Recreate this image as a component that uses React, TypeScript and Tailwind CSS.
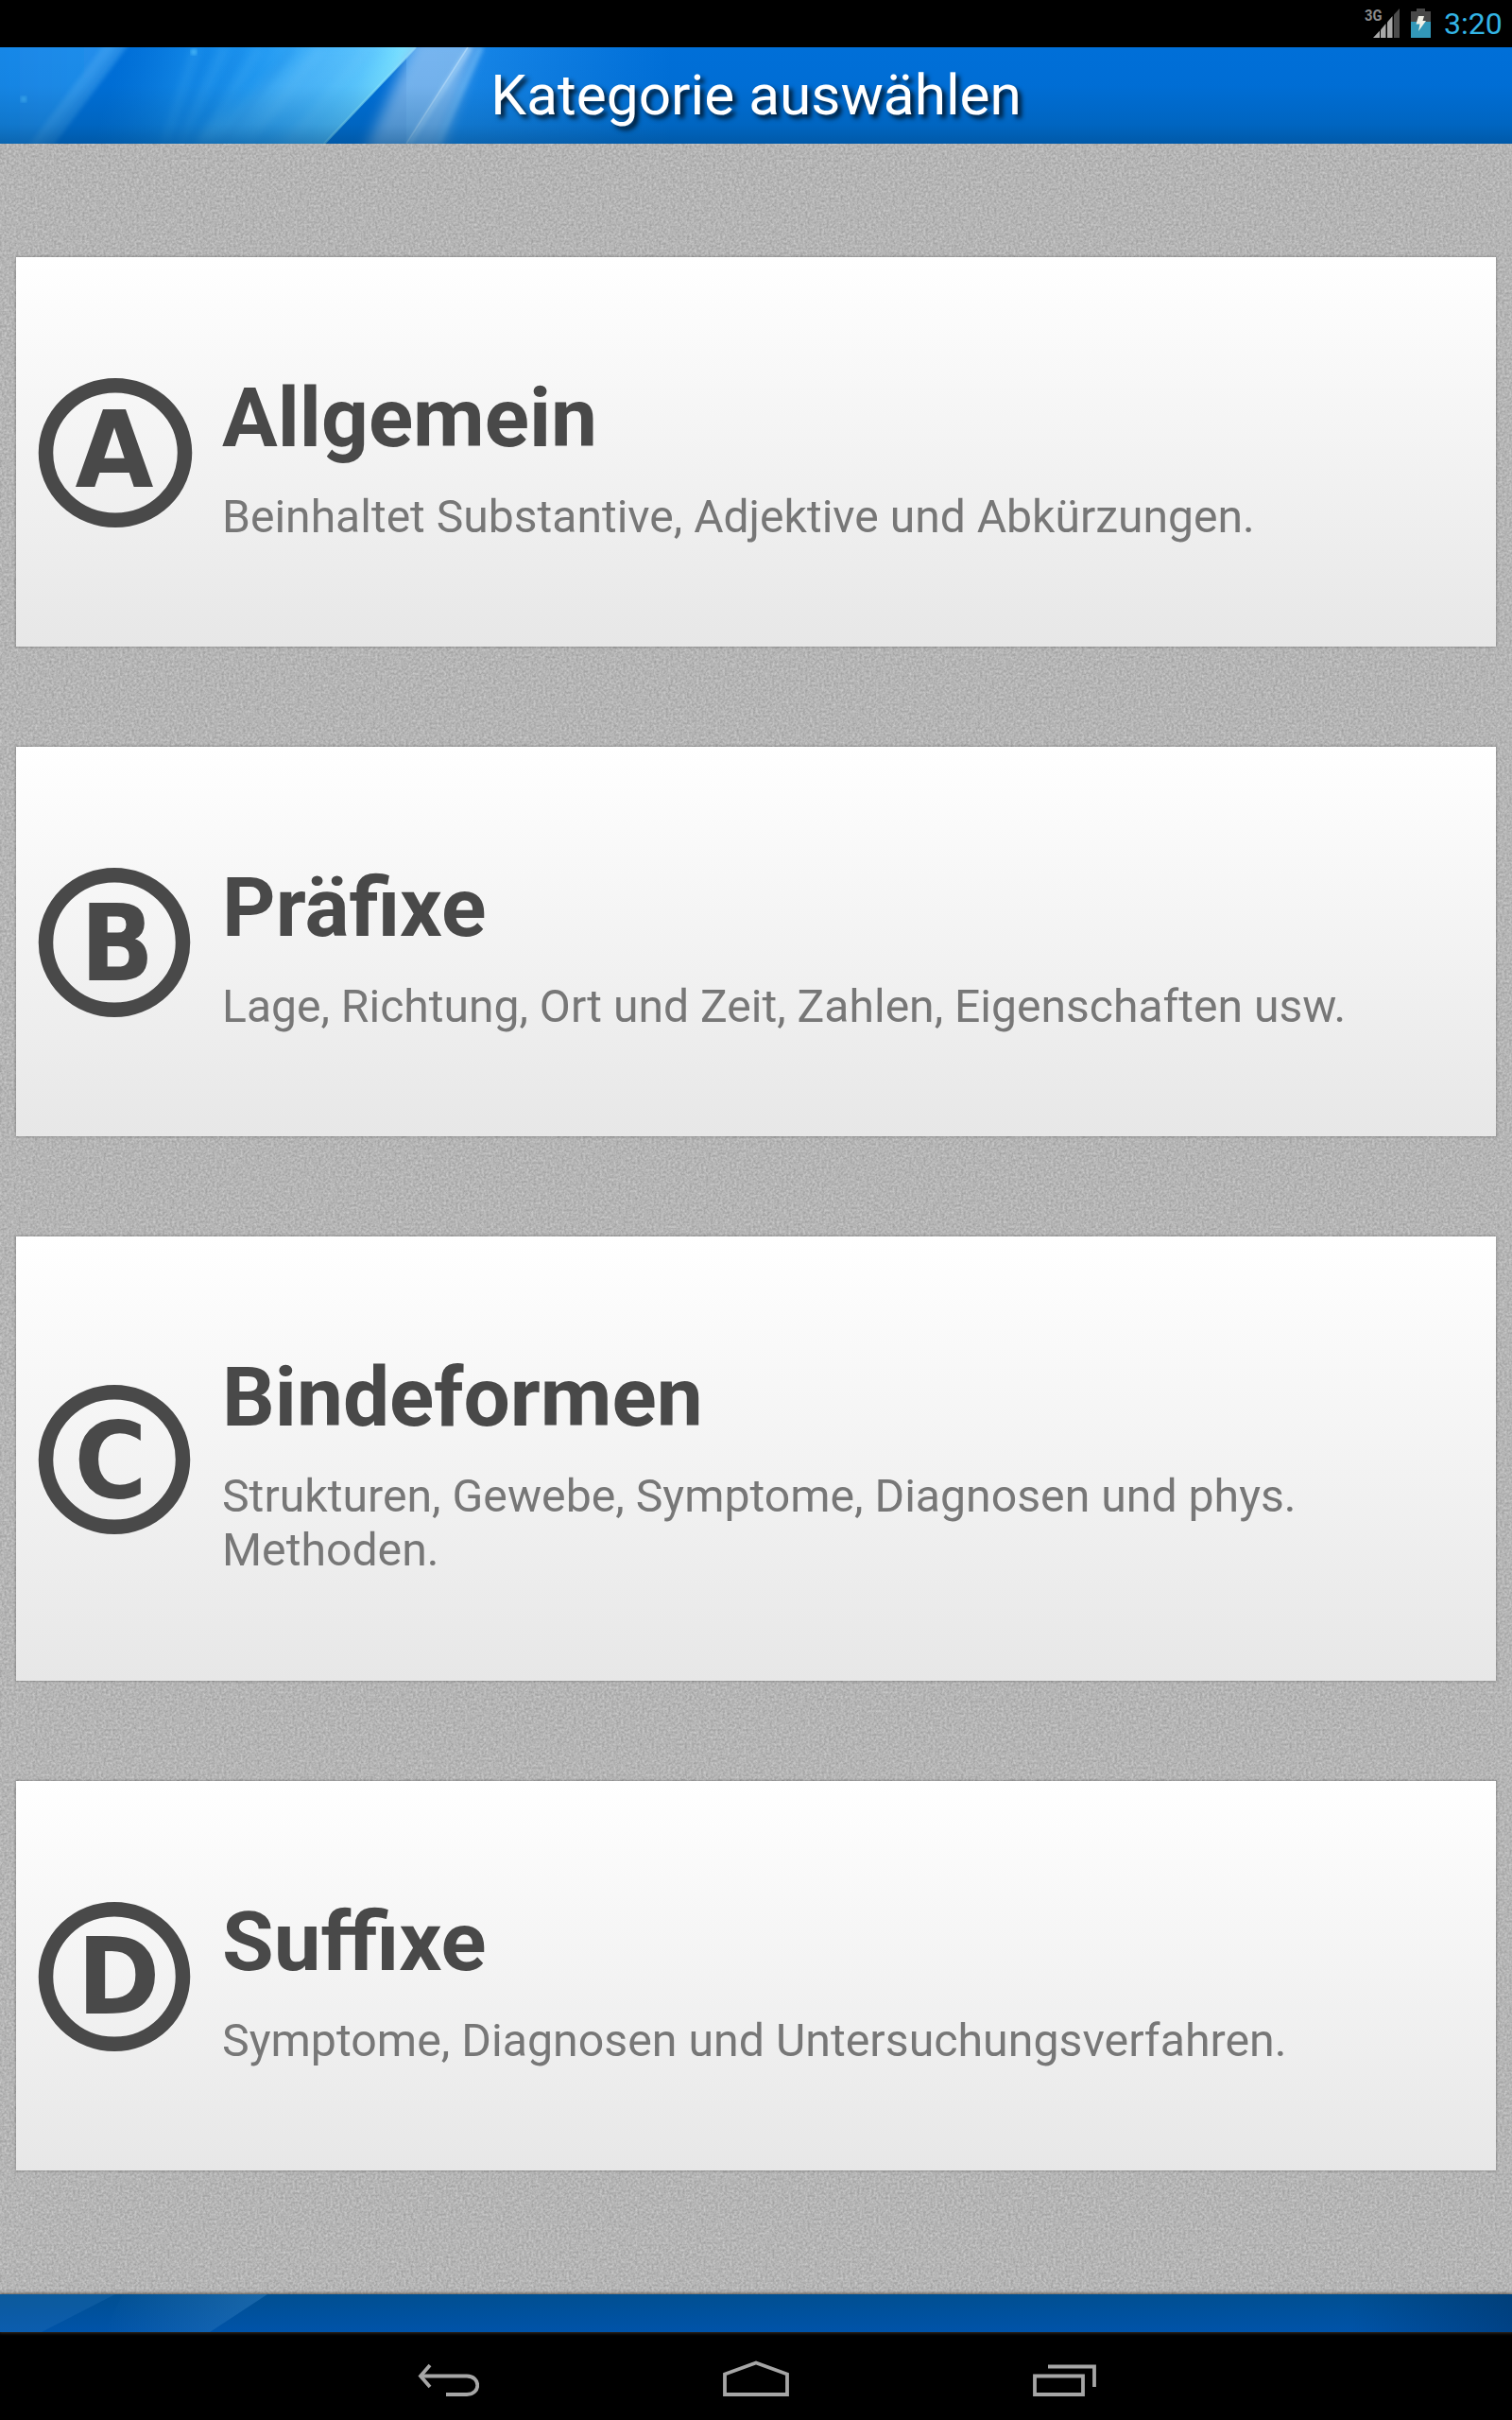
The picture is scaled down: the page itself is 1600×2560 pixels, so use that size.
const categories = [
  { letter: 'A', title: 'Allgemein', text: 'Beinhaltet Substantive, Adjektive und Abkürzungen.', letterX: 81, letterY: 116, width: 83, rx: 73.5, titleScale: 0.993, textScale: 1.001 },
  { letter: 'B', title: 'Präfixe', text: 'Lage, Richtung, Ort und Zeit, Zahlen, Eigenschaften usw.', letterX: 84, letterY: 120, width: 78, rx: 72.5, titleScale: 0.999, textScale: 1.001 },
  { letter: 'C', title: 'Bindeformen', text: 'Strukturen, Gewebe, Symptome, Diagnosen und phys. Methoden.', letterX: 77, letterY: 119.5, width: 77, rx: 72.5, titleScale: 0.993, textScale: 1.004 },
  { letter: 'D', title: 'Suffixe', text: 'Symptome, Diagnosen und Untersuchungsverfahren.', letterX: 85.5, letterY: 119, width: 88, rx: 72.5, titleScale: 1.01, textScale: 1.006 },
];

type Category = (typeof categories)[number];

function StatusBar() {
  return (
    <div className="h-[50px] bg-black flex items-center justify-end pr-3">
      <svg className="w-[38px] h-[50px]" viewBox="0 0 38 50">
        <text x="0" y="22" fontSize="17" fontWeight="700" fill="#8a8a8a" textLength="18.500" lengthAdjust="spacingAndGlyphs" className="font-['Roboto',sans-serif]">3G</text>
        <path d="M9 40L16 32.500V40z" fill="#a8a8a8" />
        <path d="M17 31.500L22.500 25V40H17z" fill="#a8a8a8" />
        <path d="M24 23.500L29.500 17V40H24z" fill="#a8a8a8" />
        <path d="M31 15.500L37 9V40H31z" fill="#4c4c4c" />
      </svg>
      <svg className="w-[21px] h-[50px] ml-[11px]" viewBox="0 0 21 50">
        <path d="M0 12H6V9H15V12H21V24H0z" fill="#484848" />
        <path d="M0 23H21V40H0z" fill="#3297b8" />
        <path d="M8 17H14L12.500 22H16L8 33L9.500 25.500H5.500z" fill="#f1f1e8" />
      </svg>
      <span className="ml-[14px] w-[60px] text-right text-[32px] leading-[50px] text-[#33b5e5] whitespace-nowrap">3:20</span>
    </div>
  );
}

function Header() {
  return (
    <header className="relative h-[102px] overflow-hidden bg-[#006fd8] flex items-center justify-center">
      <svg className="absolute inset-0 w-full h-full" viewBox="0 0 1600 102" preserveAspectRatio="none">
        <defs>
          <linearGradient id="glow" gradientUnits="userSpaceOnUse" x1="130" y1="0" x2="400" y2="85">
            <stop offset="0" stopColor="#0a7de0" stopOpacity="0" />
            <stop offset="0.25" stopColor="#1288e8" stopOpacity="0.9" />
            <stop offset="0.5" stopColor="#2199f2" />
            <stop offset="0.7" stopColor="#42b2fa" />
            <stop offset="0.88" stopColor="#5cc8ff" />
            <stop offset="1" stopColor="#78e0ff" />
          </linearGradient>
          <linearGradient id="left" x1="0" x2="1">
            <stop offset="0" stopColor="#1585e6" />
            <stop offset="1" stopColor="#2490ec" />
          </linearGradient>
          <linearGradient id="halo" x1="0" x2="1">
            <stop offset="0" stopColor="#1d8cec" />
            <stop offset="1" stopColor="#1d8cec" stopOpacity="0" />
          </linearGradient>
          <linearGradient id="shade" x1="0" x2="0" y1="0" y2="1">
            <stop offset="0" stopColor="#004a80" stopOpacity="0" />
            <stop offset="0.4" stopColor="#004a80" stopOpacity="0.04" />
            <stop offset="0.8" stopColor="#004a80" stopOpacity="0.26" />
            <stop offset="1" stopColor="#004378" stopOpacity="0.5" />
          </linearGradient>
          <filter id="soft2"><feGaussianBlur stdDeviation="2" /></filter>
          <filter id="soft4"><feGaussianBlur stdDeviation="4" /></filter>
          <filter id="soft7" x="-30%" width="160%"><feGaussianBlur stdDeviation="7" /></filter>
        </defs>
        <rect x="430" width="280" height="102" fill="url(#halo)" />
        <path d="M-30 -20H140L30 122H-30z" fill="url(#left)" filter="url(#soft4)" />
        <path d="M112 -5H138L54 107H28z" fill="#4aa6f0" opacity=".45" filter="url(#soft2)" />
        <path d="M120 -5H445L338 107H100z" fill="url(#glow)" />
        <path d="M330 0H410L250 102H200z" fill="#58bcfa" opacity=".45" filter="url(#soft7)" />
        <path d="M440 0L343 102" stroke="#8be8ff" strokeWidth="2.500" opacity=".7" />
        <path d="M208 0L175 102M238 0L190 102M275 0L212 102M340 0L262 102M390 0L305 102" stroke="#8fd8ff" strokeWidth="9" opacity=".1" filter="url(#soft4)" />
        <path d="M222 0L184 102M256 0L203 102M310 0L235 102" stroke="#0066cc" strokeWidth="7" opacity=".12" filter="url(#soft4)" />
        <path d="M440 -10H508L465 112H385z" fill="#96c4f2" opacity=".75" filter="url(#soft7)" />
        <path d="M497 0L433 102" stroke="#b9e2ff" strokeWidth="5" opacity=".5" filter="url(#soft2)" />
        <path d="M495 0L430 102" stroke="#cdeaff" strokeWidth="1.500" opacity=".5" />
        <path d="M509 0L463 102" stroke="#7cc2fa" strokeWidth="6" opacity=".5" filter="url(#soft2)" />
        <circle cx="205" cy="5" r="3" fill="#5fcfff" opacity=".8" filter="url(#soft2)" />
        <circle cx="25" cy="55" r="3" fill="#5fcfff" opacity=".7" filter="url(#soft2)" />
        <rect width="1600" height="102" fill="url(#shade)" />
      </svg>
      <h1 className="relative text-[60px] leading-[70px] text-white whitespace-nowrap scale-x-[1.006] [text-shadow:4px_4px_5px_rgba(0,0,0,0.8)]">Kategorie auswählen</h1>
    </header>
  );
}

function LetterIcon({ category: c }: { category: Category }) {
  return (
    <svg className="w-[164px] h-[160px] shrink-0" viewBox="0 0 164 160" fill="none">
      <ellipse cx={c.rx + 8.5} cy="80" rx={c.rx} ry="71.300" stroke="#494949" strokeWidth="15.500" />
      <text x={c.letterX} y={c.letterY} textAnchor="middle" fontSize="112" fontWeight="700" fill="#494949" textLength={c.width} lengthAdjust="spacingAndGlyphs" className="font-['DejaVu_Sans',sans-serif]">{c.letter}</text>
    </svg>
  );
}

function CategoryCard({ category: c }: { category: Category }) {
  return (
    <section className="pt-[118px] pb-[109px] pl-[23px] flex bg-linear-to-b from-white to-[#e7e7e7] shadow-[0_0_2px_1px_rgba(0,0,0,0.2)] nth-3:min-h-[470px]">
      <div className="flex items-center -mt-4 -mb-2">
        <LetterIcon category={c} />
      </div>
      <div className="ml-[31px] w-[1200px]">
        <h2 className="text-[88px] leading-[103px] font-bold text-[#494949] whitespace-nowrap origin-left" style={{ transform: `scaleX(${c.titleScale})` }}>{c.title}</h2>
        <p className="mt-[25px] text-[48px] leading-[57px] text-[#777777] origin-left" style={{ transform: `scaleX(${c.textScale})` }}>{c.text}</p>
      </div>
    </section>
  );
}

function NavBar() {
  return (
    <nav className="h-[93px] pt-[2px] bg-black flex items-center justify-center gap-[258px]">
      <svg className="w-[70px] h-[40px]" viewBox="0 0 70 40" fill="none" stroke="#a6a6a6" strokeWidth="3.800">
        <path d="M18 7L8 18.500L18 30" />
        <path d="M8 18.500H57C72 18.500 72 38 57 38H35" />
      </svg>
      <svg className="w-[70px] h-[40px]" viewBox="0 0 70 40" fill="none" stroke="#a6a6a6" strokeWidth="3.800">
        <path d="M2 38V16.500L35 4.500L68 16.500V38z" />
      </svg>
      <svg className="w-[70px] h-[40px]" viewBox="0 0 70 40" fill="none" stroke="#a6a6a6" strokeWidth="3.800">
        <path d="M2 18.500H53V38H2z" />
        <path d="M16 8.500H65V30" />
      </svg>
    </nav>
  );
}

export default function App() {
  return (
    <div className="w-[1600px] h-[2560px] overflow-hidden flex flex-col font-['Roboto',sans-serif]">
      <StatusBar />
      <Header />

      <main className="relative h-[2275px] bg-[#b3b3b3] px-[17px] pt-[120px]">
        {/* Paper grain */}
        <svg className="absolute inset-0 w-full h-full">
          <filter id="grain" x="0" y="0" width="100%" height="100%" colorInterpolationFilters="sRGB">
            <feTurbulence type="fractalNoise" baseFrequency="0.4" numOctaves="2" seed="4" />
            <feColorMatrix values="0.24 0 0 0 0.588  0.24 0 0 0 0.588  0.24 0 0 0 0.588  0 0 0 0 1" />
          </filter>
          <rect width="100%" height="100%" filter="url(#grain)" />
        </svg>

        <div className="relative flex flex-col gap-[106px]">
          {categories.map(c => (
            <CategoryCard key={c.letter} category={c} />
          ))}
        </div>
      </main>

      <footer className="relative h-[40px] bg-linear-to-b from-[#004f91] to-[#0053a9] shadow-[0_0_3px_1px_rgba(70,60,50,0.8)]">
        <svg className="w-full h-full" viewBox="0 0 1600 40" preserveAspectRatio="none">
          <defs>
            <linearGradient id="beam" x1="0" x2="1">
              <stop offset="0" stopColor="#3b86c6" stopOpacity="0" />
              <stop offset="1" stopColor="#3b86c6" stopOpacity="0.42" />
            </linearGradient>
            <linearGradient id="edge" x1="0" x2="1">
              <stop offset="0" stopColor="#002c5c" stopOpacity="0" />
              <stop offset="1" stopColor="#002c5c" stopOpacity="0.45" />
            </linearGradient>
          </defs>
          <path d="M0 0H122L44 40H0z" fill="#3b86c6" opacity=".2" />
          <path d="M130 0H283L222 40H110z" fill="url(#beam)" />
          <rect x="1430" width="170" height="40" fill="url(#edge)" />
        </svg>
      </footer>
      <NavBar />
    </div>
  );
}
